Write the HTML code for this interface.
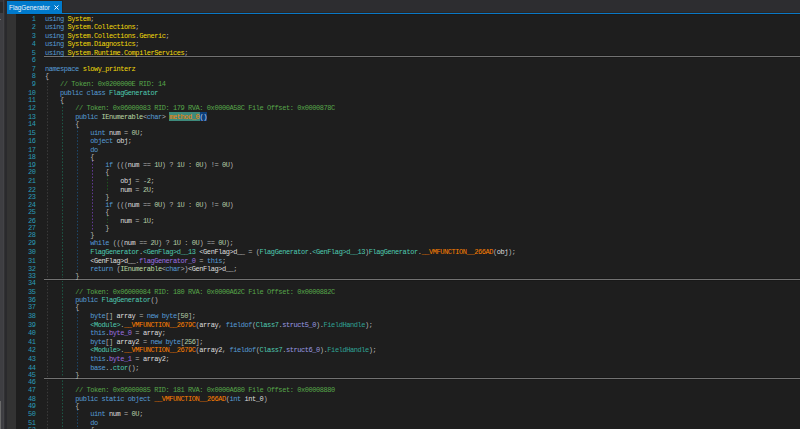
<!DOCTYPE html>
<html><head><meta charset="utf-8"><style>
*{margin:0;padding:0;box-sizing:border-box}
html,body{width:800px;height:429px;overflow:hidden;background:#1e1e1e}
body{position:relative;font-family:"Liberation Mono",monospace}
.abs{position:absolute}
#lp1{position:absolute;left:0;top:0;width:3px;height:429px;background:#3e3e42}
#lp1t{position:absolute;left:0;top:2px;width:3px;height:11px;background:#2a2a2b}
#lp1tt{position:absolute;left:0;top:0;width:3px;height:2px;background:#333336}
#thumb{position:absolute;left:0;top:401px;width:1px;height:28px;background:#6a6a6a}
#tick{position:absolute;left:0;top:19px;width:1px;height:1px;background:#707070}
#lp2{position:absolute;left:3px;top:0;width:1px;height:429px;background:#434347}
#lp3{position:absolute;left:4px;top:0;width:1px;height:429px;background:#313133}
#lp4{position:absolute;left:5px;top:0;width:2px;height:429px;background:#2a2a2d}
#tabrow{position:absolute;left:7px;top:0;width:793px;height:13px;background:#2d2d30}
#tabrow0{position:absolute;left:6px;top:0;width:57px;height:1px;background:#282624}
#tabedge{position:absolute;left:62px;top:0;width:1px;height:13px;background:#292523}
#tabline{position:absolute;left:7px;top:13px;width:793px;height:1px;background:#0a78c6;box-shadow:0 -1px 0 #2a2624}
#tabline2{position:absolute;left:7px;top:14px;width:793px;height:1px;background:#1b1916}
#tab{position:absolute;left:7px;top:1px;width:55px;height:13px;background:#007acc}
#tabtxt{position:absolute;left:9px;top:3.5px;font-family:"Liberation Sans",sans-serif;font-size:6.4px;letter-spacing:-0.02px;color:#eef4fa;white-space:nowrap}
#tabx{position:absolute;left:53.7px;top:5.4px;width:5px;height:5px}
#gm{position:absolute;left:7px;top:14px;width:9px;height:415px;background:#333333}
.ln{position:absolute;left:10px;width:25.6px;text-align:right;font-size:7px;letter-spacing:-0.437px;line-height:8.07px;height:8.07px;color:#2a9cb8;white-space:pre}
.cl{position:absolute;left:45px;font-size:7px;letter-spacing:-0.437px;line-height:8.07px;height:8.07px;color:#dcdcdc;white-space:pre}
.k{color:#569cd6}.n{color:#f2da0a}.t{color:#4ec9b0}.i{color:#b8d7a3}.m{color:#ff8000}
.f{color:#9b6fe0}.sf{color:#9a9ae0}.p{color:#2fa395}.c{color:#57a64a}.d{color:#b5cea8}
.l{color:#dcdcdc}.o{color:#b4b4b4}
.hm{color:#ff8000}
.hb{color:#c8d8f0}
#hl1{position:absolute;left:169px;top:112px;width:31px;height:9px;background:#3d8a7c}
#hl2{position:absolute;left:200px;top:112px;width:7px;height:9px;background:#0d3f7a}
.g{position:absolute;width:1px;background-image:repeating-linear-gradient(to bottom,transparent 0,var(--gc) 0.9px,var(--gc) 1.5px,transparent 2.4px,transparent 3.22px)}
.gg{--gc:#3a3a3a}.gc{--gc:#1d5846}.gm{--gc:#1d476a}.gd{--gc:#623a94}.gi{--gc:#1e541e}
.sep{position:absolute;left:44px;width:756px;height:1px;background:#727272;box-shadow:0 -1px 0 #191919,0 1px 0 #191919}
</style></head><body>
<div id="lp1"></div><div id="lp1tt"></div><div id="lp1t"></div><div id="thumb"></div><div id="tick"></div><div id="lp2"></div><div id="lp3"></div><div id="lp4"></div>
<div id="tabrow"></div><div id="tabrow0"></div><div id="tabedge"></div><div id="tabline2"></div><div id="tabline"></div>
<div id="tab"></div><div id="tabtxt">FlagGenerator</div>
<svg id="tabx" viewBox="0 0 10 10"><path d="M1 1L9 9M9 1L1 9" stroke="#fff" stroke-width="1.9"/></svg>
<div id="gm"></div><div id="hl1"></div><div id="hl2"></div>
<div class="g gg" style="left:47px;top:78.60px;height:350.40px"></div>
<div class="g gc" style="left:62px;top:102.60px;height:326.40px"></div>
<div class="g gm" style="left:77px;top:126.60px;height:144.90px"></div>
<div class="g gd" style="left:92px;top:159.60px;height:70.90px"></div>
<div class="g gi" style="left:107px;top:174.60px;height:17.90px"></div>
<div class="g gi" style="left:107px;top:214.60px;height:8.90px"></div>
<div class="g gm" style="left:77px;top:309.60px;height:60.90px"></div>
<div class="g gm" style="left:77px;top:408.60px;height:20.40px"></div>
<div class="g gd" style="left:92px;top:432.60px;height:-3.60px"></div>
<div class="sep" style="top:56px"></div>
<div class="sep" style="top:279px"></div>
<div class="sep" style="top:378px"></div>
<div class="ln" style="top:15.00px">1</div>
<div class="ln" style="top:23.00px">2</div>
<div class="ln" style="top:32.00px">3</div>
<div class="ln" style="top:40.00px">4</div>
<div class="ln" style="top:49.00px">5</div>
<div class="ln" style="top:56.00px">6</div>
<div class="ln" style="top:65.00px">7</div>
<div class="ln" style="top:72.00px">8</div>
<div class="ln" style="top:80.00px">9</div>
<div class="ln" style="top:89.00px">10</div>
<div class="ln" style="top:96.00px">11</div>
<div class="ln" style="top:104.00px">12</div>
<div class="ln" style="top:113.00px">13</div>
<div class="ln" style="top:120.00px">14</div>
<div class="ln" style="top:129.00px">15</div>
<div class="ln" style="top:137.00px">16</div>
<div class="ln" style="top:146.00px">17</div>
<div class="ln" style="top:153.00px">18</div>
<div class="ln" style="top:161.00px">19</div>
<div class="ln" style="top:168.00px">20</div>
<div class="ln" style="top:177.00px">21</div>
<div class="ln" style="top:186.00px">22</div>
<div class="ln" style="top:193.00px">23</div>
<div class="ln" style="top:201.00px">24</div>
<div class="ln" style="top:208.00px">25</div>
<div class="ln" style="top:217.00px">26</div>
<div class="ln" style="top:224.00px">27</div>
<div class="ln" style="top:231.00px">28</div>
<div class="ln" style="top:239.00px">29</div>
<div class="ln" style="top:248.00px">30</div>
<div class="ln" style="top:257.00px">31</div>
<div class="ln" style="top:265.00px">32</div>
<div class="ln" style="top:272.00px">33</div>
<div class="ln" style="top:279.00px">34</div>
<div class="ln" style="top:288.00px">35</div>
<div class="ln" style="top:296.00px">36</div>
<div class="ln" style="top:303.00px">37</div>
<div class="ln" style="top:312.00px">38</div>
<div class="ln" style="top:321.00px">39</div>
<div class="ln" style="top:329.00px">40</div>
<div class="ln" style="top:338.00px">41</div>
<div class="ln" style="top:346.00px">42</div>
<div class="ln" style="top:355.00px">43</div>
<div class="ln" style="top:364.00px">44</div>
<div class="ln" style="top:371.00px">45</div>
<div class="ln" style="top:378.00px">46</div>
<div class="ln" style="top:386.00px">47</div>
<div class="ln" style="top:395.00px">48</div>
<div class="ln" style="top:402.00px">49</div>
<div class="ln" style="top:410.00px">50</div>
<div class="ln" style="top:419.00px">51</div>
<div class="ln" style="top:426.00px">52</div>
<div class="ln" style="top:434.00px">53</div>
<div class="cl" style="top:15.00px"><span class="k">using</span> <span class="n">System</span><span class="o">;</span></div>
<div class="cl" style="top:23.00px"><span class="k">using</span> <span class="n">System</span><span class="o">.</span><span class="n">Collections</span><span class="o">;</span></div>
<div class="cl" style="top:32.00px"><span class="k">using</span> <span class="n">System</span><span class="o">.</span><span class="n">Collections</span><span class="o">.</span><span class="n">Generic</span><span class="o">;</span></div>
<div class="cl" style="top:40.00px"><span class="k">using</span> <span class="n">System</span><span class="o">.</span><span class="n">Diagnostics</span><span class="o">;</span></div>
<div class="cl" style="top:49.00px"><span class="k">using</span> <span class="n">System</span><span class="o">.</span><span class="n">Runtime</span><span class="o">.</span><span class="n">CompilerServices</span><span class="o">;</span></div>
<div class="cl" style="top:56.00px"></div>
<div class="cl" style="top:65.00px"><span class="k">namespace</span> <span class="n">slowy_printerz</span></div>
<div class="cl" style="top:72.00px"><span class="o">{</span></div>
<div class="cl" style="top:80.00px">    <span class="c">// Token: 0x0200000E RID: 14</span></div>
<div class="cl" style="top:89.00px">    <span class="k">public</span> <span class="k">class</span> <span class="t">FlagGenerator</span></div>
<div class="cl" style="top:96.00px">    <span class="o">{</span></div>
<div class="cl" style="top:104.00px">        <span class="c">// Token: 0x06000083 RID: 179 RVA: 0x0000A58C File Offset: 0x0000878C</span></div>
<div class="cl" style="top:113.00px">        <span class="k">public</span> <span class="i">IEnumerable</span><span class="o"><</span><span class="k">char</span><span class="o">></span> <span class="hm">method_0</span><span class="hb">()</span></div>
<div class="cl" style="top:120.00px">        <span class="o">{</span></div>
<div class="cl" style="top:129.00px">            <span class="k">uint</span> <span class="l">num</span> <span class="o">=</span> <span class="d">0U</span><span class="o">;</span></div>
<div class="cl" style="top:137.00px">            <span class="k">object</span> <span class="l">obj</span><span class="o">;</span></div>
<div class="cl" style="top:146.00px">            <span class="k">do</span></div>
<div class="cl" style="top:153.00px">            <span class="o">{</span></div>
<div class="cl" style="top:161.00px">                <span class="k">if</span> <span class="o">(((</span><span class="l">num</span> <span class="o">==</span> <span class="d">1U</span><span class="o">) ?</span> <span class="d">1U</span> <span class="o">:</span> <span class="d">0U</span><span class="o">) !=</span> <span class="d">0U</span><span class="o">)</span></div>
<div class="cl" style="top:168.00px">                <span class="o">{</span></div>
<div class="cl" style="top:177.00px">                    <span class="l">obj</span> <span class="o">=</span> <span class="o">-</span><span class="d">2</span><span class="o">;</span></div>
<div class="cl" style="top:186.00px">                    <span class="l">num</span> <span class="o">=</span> <span class="d">2U</span><span class="o">;</span></div>
<div class="cl" style="top:193.00px">                <span class="o">}</span></div>
<div class="cl" style="top:201.00px">                <span class="k">if</span> <span class="o">(((</span><span class="l">num</span> <span class="o">==</span> <span class="d">0U</span><span class="o">) ?</span> <span class="d">1U</span> <span class="o">:</span> <span class="d">0U</span><span class="o">) !=</span> <span class="d">0U</span><span class="o">)</span></div>
<div class="cl" style="top:208.00px">                <span class="o">{</span></div>
<div class="cl" style="top:217.00px">                    <span class="l">num</span> <span class="o">=</span> <span class="d">1U</span><span class="o">;</span></div>
<div class="cl" style="top:224.00px">                <span class="o">}</span></div>
<div class="cl" style="top:231.00px">            <span class="o">}</span></div>
<div class="cl" style="top:239.00px">            <span class="k">while</span> <span class="o">(((</span><span class="l">num</span> <span class="o">==</span> <span class="d">2U</span><span class="o">) ?</span> <span class="d">1U</span> <span class="o">:</span> <span class="d">0U</span><span class="o">) ==</span> <span class="d">0U</span><span class="o">);</span></div>
<div class="cl" style="top:248.00px">            <span class="t">FlagGenerator</span><span class="o">.</span><span class="t">&lt;GenFlag&gt;d__13</span> <span class="l">&lt;GenFlag&gt;d__</span> <span class="o">= (</span><span class="t">FlagGenerator</span><span class="o">.</span><span class="t">&lt;GenFlag&gt;d__13</span><span class="o">)</span><span class="t">FlagGenerator</span><span class="o">.</span><span class="m">__VMFUNCTION__266AD</span><span class="o">(</span><span class="l">obj</span><span class="o">);</span></div>
<div class="cl" style="top:257.00px">            <span class="l">&lt;GenFlag&gt;d__</span><span class="o">.</span><span class="f">flagGenerator_0</span> <span class="o">=</span> <span class="k">this</span><span class="o">;</span></div>
<div class="cl" style="top:265.00px">            <span class="k">return</span> <span class="o">(</span><span class="i">IEnumerable</span><span class="o">&lt;</span><span class="k">char</span><span class="o">&gt;)</span><span class="l">&lt;GenFlag&gt;d__</span><span class="o">;</span></div>
<div class="cl" style="top:272.00px">        <span class="o">}</span></div>
<div class="cl" style="top:279.00px"></div>
<div class="cl" style="top:288.00px">        <span class="c">// Token: 0x06000084 RID: 180 RVA: 0x0000A62C File Offset: 0x0000882C</span></div>
<div class="cl" style="top:296.00px">        <span class="k">public</span> <span class="t">FlagGenerator</span><span class="o">()</span></div>
<div class="cl" style="top:303.00px">        <span class="o">{</span></div>
<div class="cl" style="top:312.00px">            <span class="k">byte</span><span class="o">[]</span> <span class="l">array</span> <span class="o">=</span> <span class="k">new</span> <span class="k">byte</span><span class="o">[</span><span class="d">50</span><span class="o">];</span></div>
<div class="cl" style="top:321.00px">            <span class="t">&lt;Module&gt;</span><span class="o">.</span><span class="m">__VMFUNCTION__2679C</span><span class="o">(</span><span class="l">array</span><span class="o">,</span> <span class="k">fieldof</span><span class="o">(</span><span class="t">Class7</span><span class="o">.</span><span class="sf">struct5_0</span><span class="o">).</span><span class="p">FieldHandle</span><span class="o">);</span></div>
<div class="cl" style="top:329.00px">            <span class="k">this</span><span class="o">.</span><span class="f">byte_0</span> <span class="o">=</span> <span class="l">array</span><span class="o">;</span></div>
<div class="cl" style="top:338.00px">            <span class="k">byte</span><span class="o">[]</span> <span class="l">array2</span> <span class="o">=</span> <span class="k">new</span> <span class="k">byte</span><span class="o">[</span><span class="d">256</span><span class="o">];</span></div>
<div class="cl" style="top:346.00px">            <span class="t">&lt;Module&gt;</span><span class="o">.</span><span class="m">__VMFUNCTION__2679C</span><span class="o">(</span><span class="l">array2</span><span class="o">,</span> <span class="k">fieldof</span><span class="o">(</span><span class="t">Class7</span><span class="o">.</span><span class="sf">struct6_0</span><span class="o">).</span><span class="p">FieldHandle</span><span class="o">);</span></div>
<div class="cl" style="top:355.00px">            <span class="k">this</span><span class="o">.</span><span class="f">byte_1</span> <span class="o">=</span> <span class="l">array2</span><span class="o">;</span></div>
<div class="cl" style="top:364.00px">            <span class="k">base</span><span class="o">..</span><span class="t">ctor</span><span class="o">();</span></div>
<div class="cl" style="top:371.00px">        <span class="o">}</span></div>
<div class="cl" style="top:378.00px"></div>
<div class="cl" style="top:386.00px">        <span class="c">// Token: 0x06000085 RID: 181 RVA: 0x0000A680 File Offset: 0x00008880</span></div>
<div class="cl" style="top:395.00px">        <span class="k">public</span> <span class="k">static</span> <span class="k">object</span> <span class="m">__VMFUNCTION__266AD</span><span class="o">(</span><span class="k">int</span> <span class="l">int_0</span><span class="o">)</span></div>
<div class="cl" style="top:402.00px">        <span class="o">{</span></div>
<div class="cl" style="top:410.00px">            <span class="k">uint</span> <span class="l">num</span> <span class="o">=</span> <span class="d">0U</span><span class="o">;</span></div>
<div class="cl" style="top:419.00px">            <span class="k">do</span></div>
<div class="cl" style="top:426.00px">            <span class="o">{</span></div>
<div class="cl" style="top:434.00px"></div>
</body></html>
